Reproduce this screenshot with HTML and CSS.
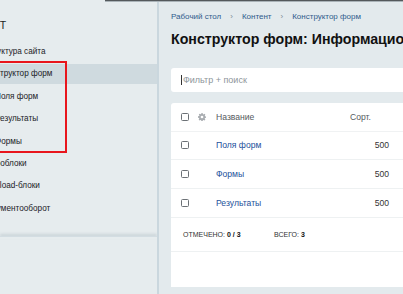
FILE: index.html
```html
<!DOCTYPE html>
<html lang="ru">
<head>
<meta charset="utf-8">
<link rel="stylesheet" href="styles.css">
</head>
<body>
<div class="top"><div class="top-gap"></div><div class="top-line"></div></div>
<div class="layout">
  <aside class="sidebar">
    <div class="menu">
      <div class="menu-title">Контент</div>
      <div class="item l1">Структура сайта</div>
      <div class="item l1 active">Конструктор форм</div>
      <div class="item l2">Поля форм</div>
      <div class="item l2">Результаты</div>
      <div class="item l2">Формы</div>
      <div class="item l1">Инфоблоки</div>
      <div class="item l1">Highload-блоки</div>
      <div class="item l1">Документооборот</div>
    </div>
    <div class="side-sep"></div>
  </aside>
  <main class="main">
    <nav class="crumbs">
      <span>Рабочий стол</span><span class="arr">›</span><span>Контент</span><span class="arr">›</span><span>Конструктор форм</span>
    </nav>
    <h1 class="title">Конструктор форм: Информационный блок</h1>
    <div class="filter"><span class="caret"></span><span class="ph">Фильтр + поиск</span></div>
    <div class="card">
      <div class="row head">
        <span class="cb"></span>
        <svg class="gear" viewBox="0 0 10 10" width="8" height="8"><path fill="#a9adb1" d="M4.2 0h1.6l.3 1.4.8.4 1.2-.8 1.1 1.1-.8 1.2.4.8 1.4.3v1.6l-1.4.3-.4.8.8 1.2-1.1 1.1-1.2-.8-.8.4-.3 1.4H4.2l-.3-1.4-.8-.4-1.2.8-1.1-1.1.8-1.2-.4-.8L0 5.8V4.2l1.4-.3.4-.8-.8-1.2 1.1-1.1 1.2.8.8-.4zM5 3.3A1.7 1.7 0 1 0 5 6.7 1.7 1.7 0 1 0 5 3.3z"/></svg>
        <span class="name">Название</span>
        <span class="sort">Сорт.</span>
      </div>
      <div class="row">
        <span class="cb"></span><span class="gap"></span>
        <span class="name link">Поля форм</span>
        <span class="num">500</span>
      </div>
      <div class="row">
        <span class="cb"></span><span class="gap"></span>
        <span class="name link">Формы</span>
        <span class="num">500</span>
      </div>
      <div class="row">
        <span class="cb"></span><span class="gap"></span>
        <span class="name link">Результаты</span>
        <span class="num">500</span>
      </div>
      <div class="foot">
        <span class="stat">Отмечено: <b>0 / 3</b></span>
        <span class="stat">Всего: <b>3</b></span>
      </div>
    </div>
  </main>
</div>
<div class="mark"></div>
</body>
</html>
```
FILE: styles.css
```css
html, body {
  margin: 0;
  padding: 0;
  width: 403px;
  height: 294px;
  overflow: hidden;
  background: #e3eaed;
  font-family: "Liberation Sans", Arial, sans-serif;
  position: relative;
}
.top {
  display: flex;
  height: 2px;
}
.top-gap {
  width: 105px;
  background: #e6ecee;
}
.top-line {
  flex: 1;
  background: #54595c;
  border-bottom: 1px solid #aab3b8;
  height: 1px;
}
.layout {
  display: flex;
  height: 292px;
}
.sidebar {
  width: 157px;
  flex: none;
  background: #e6ecee;
  border-right: 2px solid #cad7de;
  overflow: hidden;
  display: flex;
  flex-direction: column;
}
.menu {
  margin-left: -60px;
  padding-top: 14px;
  height: 220px;
}
.menu-title {
  font-size: 10.5px;
  text-transform: uppercase;
  color: #1b1f22;
  height: 18px;
  line-height: 18px;
  padding-left: 17px;
  margin-bottom: 8px;
}
.item {
  font-size: 8.2px;
  color: #1b2227;
  height: 20px;
  line-height: 20px;
  margin-bottom: 2.4px;
  white-space: nowrap;
}
.item.l1 { padding-left: 43px; }
.item.l2 { padding-left: 55px; }
.item.active { background: #cfdadf; padding-left: 42px; }
.side-sep {
  height: 2px;
  border-top: 1px solid #d3dde2;
  box-shadow: 0 -2px 3px rgba(120, 140, 150, 0.25);
}
.main {
  flex: 1;
  min-width: 0;
  padding-left: 12px;
  overflow: hidden;
}
.crumbs {
  font-size: 8px;
  color: #2f5b8c;
  display: flex;
  white-space: nowrap;
  height: 12px;
  line-height: 12px;
  margin-top: 9px;
}
.crumbs .arr {
  color: #7d8a94;
  margin: 0 9px;
}
.title {
  margin: 6px 0 0 0;
  font-size: 14.2px;
  font-weight: bold;
  color: #111;
  white-space: nowrap;
  height: 20px;
  line-height: 20px;
}
.filter {
  margin-top: 19px;
  width: 320px;
  height: 24px;
  background: #fff;
  border-radius: 3px;
  display: flex;
  align-items: center;
  padding-left: 10px;
}
.caret {
  width: 1px;
  height: 10px;
  background: #333;
  margin-right: 1px;
}
.ph {
  font-size: 9px;
  color: #8e959a;
}
.card {
  margin-top: 11px;
  width: 330px;
  height: 184px;
  background: #fff;
  border-radius: 3px 0 0 0;
}
.row {
  display: flex;
  align-items: center;
  height: 27.8px;
  border-bottom: 1px solid #eef1f2;
  padding-left: 10px;
  font-size: 8.6px;
}
.row.head { height: 27.5px; color: #555b60; border-bottom-color: #f0f2f3; }
.cb {
  width: 6px;
  height: 6px;
  border: 1px solid #6c7176;
  border-radius: 1.5px;
  flex: none;
}
.gear { margin-left: 9px; flex: none; }
.gap { width: 17px; flex: none; }
.name { margin-left: 10px; width: 134px; }
.link { color: #23519b; }
.sort { color: #555b60; }
.num { width: 39px; text-align: right; color: #333; }
.foot {
  display: flex;
  height: 33px;
  align-items: center;
  padding-left: 12px;
  border-bottom: 1px solid #eef1f2;
  font-size: 7px;
  text-transform: uppercase;
  color: #333;
}
.foot .stat { width: 91px; }
.foot b { color: #111; }
.mark {
  position: absolute;
  left: -4px;
  top: 61px;
  width: 67px;
  height: 88px;
  border: 2px solid #e8161d;
}
```
